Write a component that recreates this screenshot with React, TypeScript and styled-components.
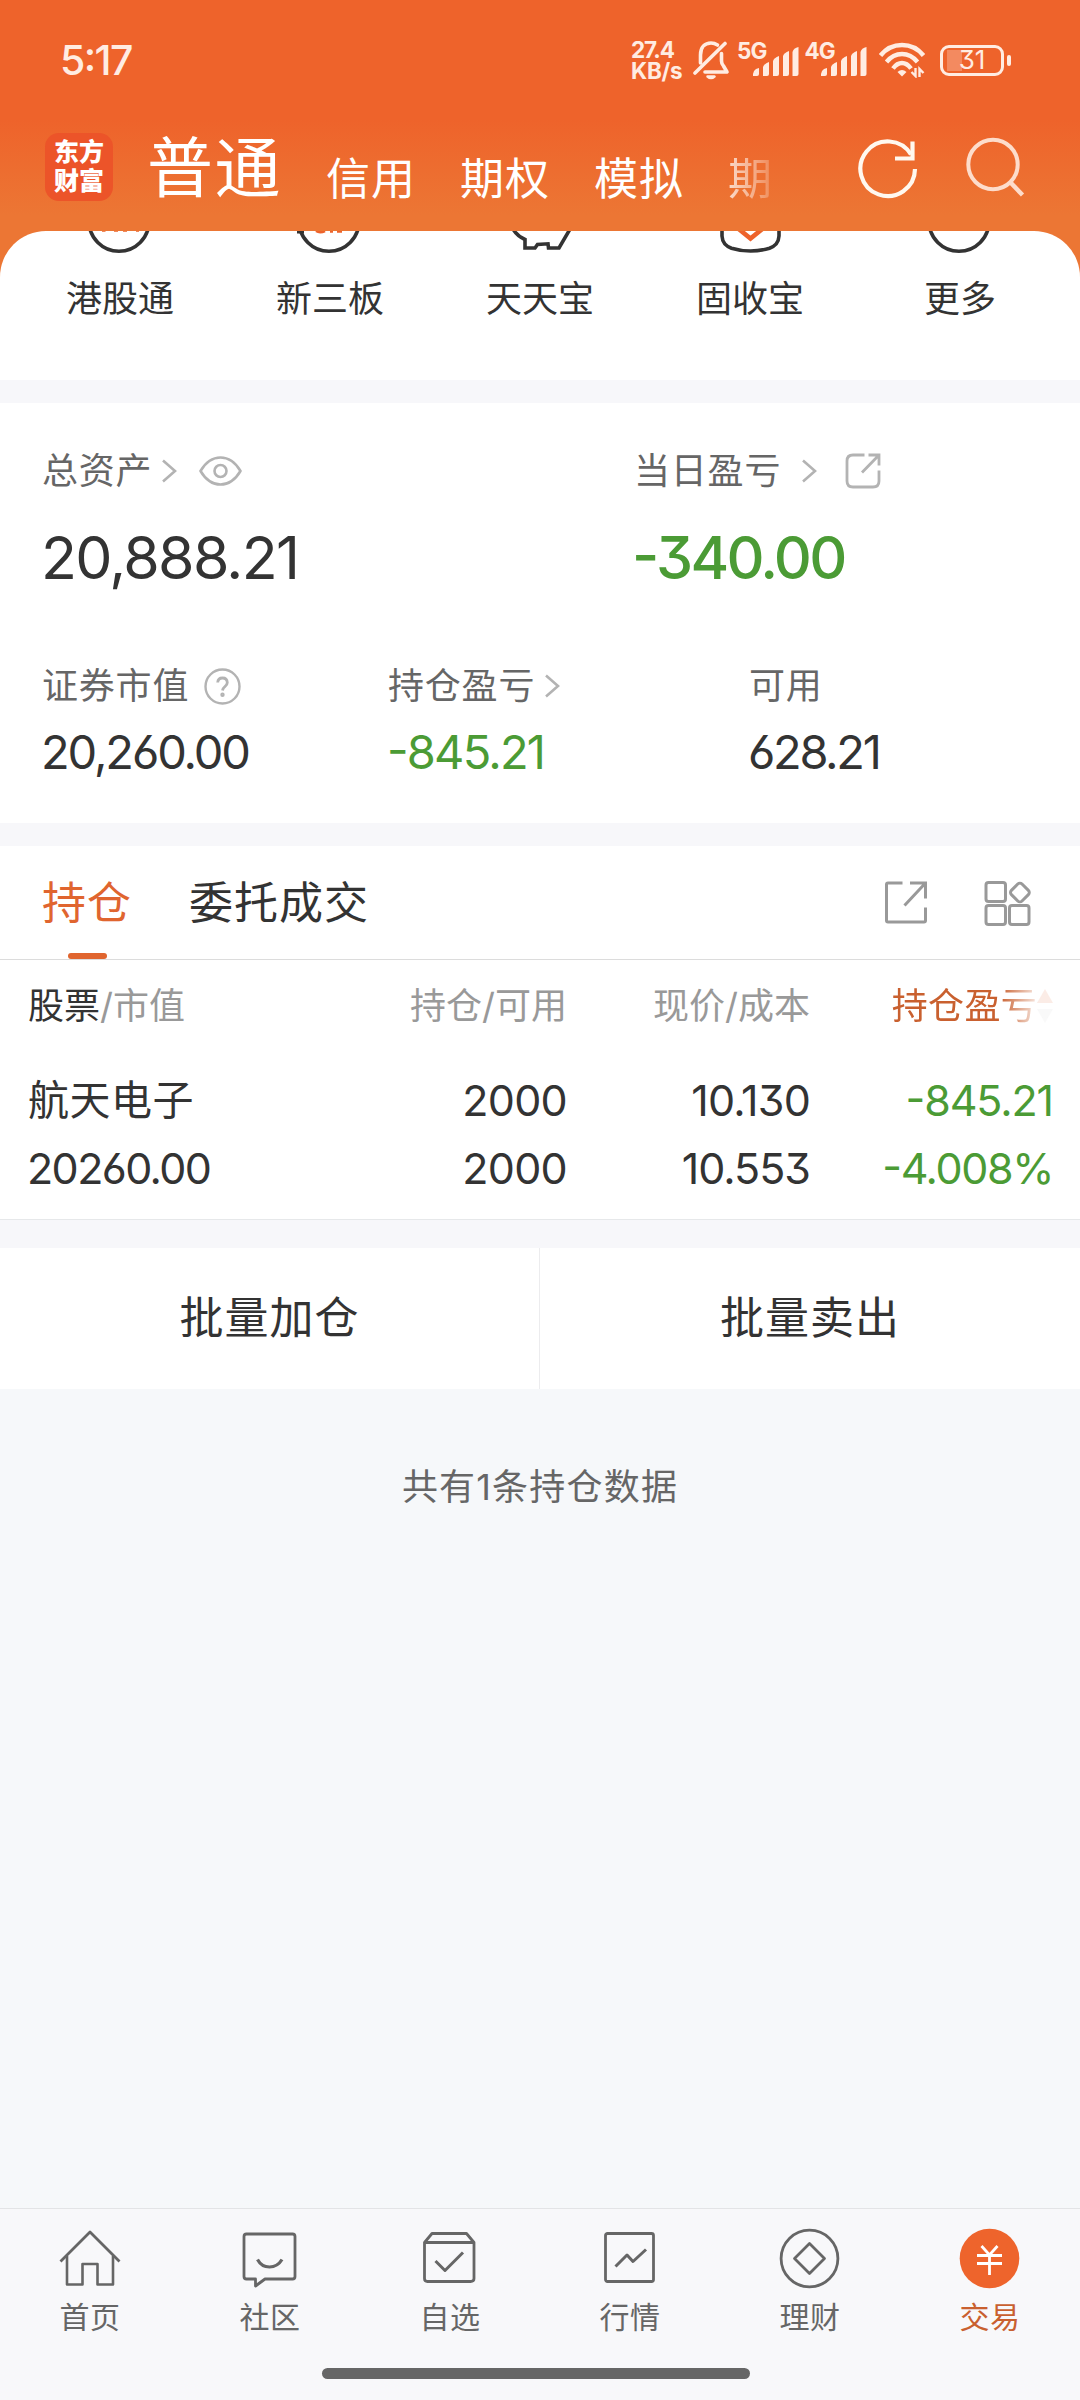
import React from "react";
import styled, { createGlobalStyle } from "styled-components";

const FONT = `Inter, "Noto Sans CJK SC", sans-serif`;
const INK = "#333333";
const GRAY = "#666666";
const LIGHT = "#999999";
const FAINT = "#b3b3b3";
const GREEN = "#4b9b35";
const ORANGE = "#e0652f";

const Global = createGlobalStyle`
  * { box-sizing: border-box; }
  body { margin: 0; background: #f7f8fa; }
  svg { display: block; flex: none; }
`;

const Screen = styled.div`
  width: 1080px;
  height: 2400px;
  display: flex;
  flex-direction: column;
  overflow: hidden;
  background: #f6f8fa;
  font-family: ${FONT};
  color: ${INK};
`;

const Label = styled.span<{ $size?: number; $color?: string; $ls?: number; $weight?: number; $ml?: number }>`
  font-size: ${(p) => p.$size ?? 36}px;
  line-height: ${(p) => p.$size ?? 36}px;
  color: ${(p) => p.$color ?? "inherit"};
  letter-spacing: ${(p) => p.$ls ?? 0}px;
  font-weight: ${(p) => p.$weight ?? 400};
  margin-left: ${(p) => p.$ml ?? 0}px;
  font-feature-settings: "case", "cv03", "cv04", "cv09";
  white-space: nowrap;
`;

const Header = styled.header`
  height: 231px;
  flex: none;
  background: linear-gradient(#ee632b 0, #ee632b 120px, #ec7634 215px, #ec7634 100%);
  color: #fff;
`;

const StatusBar = styled.div`
  height: 120px;
  padding: 0 69px 0 60px;
  display: flex;
  align-items: center;
  justify-content: space-between;
  color: #ffece2;
`;

const StatusIcons = styled.div`
  display: flex;
  align-items: center;
`;

const Speed = styled.div`
  display: flex;
  flex-direction: column;
  width: 62px;
`;

const SpeedLine = styled.span<{ $ls: number }>`
  font-size: 22.5px;
  line-height: 21px;
  font-weight: 700;
  letter-spacing: ${(p) => p.$ls}px;
`;

const Signal = styled.div`
  display: flex;
  width: 67.5px;
  height: 36px;
`;

const WifiSlot = styled.div`
  margin-left: 7px;
`;

const Generation = styled.span`
  width: 16px;
  font-size: 22.5px;
  line-height: 17px;
  font-weight: 700;
  letter-spacing: -1px;
  white-space: nowrap;
`;

const Battery = styled.div`
  width: 64px;
  height: 31px;
  margin-left: 15px;
  border: 3px solid #ffece2;
  border-radius: 9px;
  display: flex;
  align-items: center;
  justify-content: center;
  background: linear-gradient(90deg, #f38a60 15px, transparent 15px) 4px 2px / 50px 21px no-repeat;
`;

const BatteryCap = styled.div`
  width: 4px;
  height: 11px;
  margin-left: 3px;
  border-radius: 2px;
  background: #ffece2;
`;

const TitleBar = styled.div`
  height: 111px;
  display: flex;
  padding: 13px 55px 0 45px;
`;

const Brand = styled.div`
  width: 68px;
  height: 68px;
  border-radius: 14px;
  background: #ec5429;
  display: flex;
  flex-direction: column;
  align-items: center;
  justify-content: center;
  gap: 4px;
`;

const AccountTabs = styled.nav`
  height: 68px;
  margin-left: 34px;
  display: flex;
  align-items: flex-end;
  gap: 44px;
  flex: 1;
`;

const Fading = styled(Label)`
  mask-image: linear-gradient(90deg, rgba(0, 0, 0, 0.75), rgba(0, 0, 0, 0.2));
`;

const HeaderActions = styled.div`
  display: flex;
  gap: 42px;
  padding-top: 4px;
`;

const PanelBack = styled.div`
  flex: none;
  background: linear-gradient(#ec7634 60px, #fff 60px);
`;

const Services = styled.section`
  height: 149px;
  padding-left: 15px;
  display: flex;
  background: #fff;
  border-radius: 46px 46px 0 0;
`;

const Service = styled.div`
  width: 210px;
  display: flex;
  flex-direction: column;
  align-items: center;
  gap: 26px;
`;

const Band = styled.div<{ $h: number }>`
  flex: none;
  height: ${(p) => p.$h}px;
  background: #f7f7fa;
`;

const Assets = styled.section`
  flex: none;
  height: 420px;
  padding: 49px 43px 0;
  background: #fff;
`;

const AssetRow = styled.div<{ $cols: string; $gap: number; $mt?: number }>`
  display: grid;
  grid-template-columns: ${(p) => p.$cols};
  row-gap: ${(p) => p.$gap}px;
  margin-top: ${(p) => p.$mt ?? 0}px;
`;

const Caption = styled.div`
  height: 38px;
  display: flex;
  align-items: center;
`;

const Spacer = styled.span<{ $w: number }>`
  width: ${(p) => p.$w}px;
`;

const Tabs = styled.section`
  flex: none;
  height: 114px;
  padding: 0 49px 0 42px;
  display: flex;
  background: #fff;
  border-bottom: 1px solid #dcdcdc;
`;

const Tab = styled.div`
  position: relative;
  height: 113px;
  margin-right: 57px;
  display: flex;
  align-items: center;
`;

const Underline = styled.div`
  position: absolute;
  left: 26px;
  bottom: 0;
  width: 39px;
  height: 6px;
  border-radius: 3px;
  background: ${ORANGE};
`;

const TabTools = styled.div`
  margin-left: auto;
  display: flex;
  align-items: center;
  gap: 56px;
`;

const Holdings = styled.section`
  flex: none;
  height: 260px;
  padding: 27px 27px 0 28px;
  background: #fff;
  border-bottom: 1px solid #e6e8ea;
`;

const TableRow = styled.div<{ $h: number; $mt?: number }>`
  display: grid;
  grid-template-columns: 301px 238px 243px 1fr;
  height: ${(p) => p.$h}px;
  margin-top: ${(p) => p.$mt ?? 0}px;
  align-items: center;
`;

const Cell = styled.div<{ $right?: boolean }>`
  display: flex;
  align-items: center;
  justify-content: ${(p) => (p.$right ? "flex-end" : "flex-start")};
`;

const SortHead = styled.div`
  display: flex;
  align-items: center;
  justify-content: flex-end;
  mask-image: linear-gradient(90deg, #000 78%, rgba(0, 0, 0, 0.12) 94%);
`;

const Batch = styled.section`
  flex: none;
  height: 141px;
  display: grid;
  grid-template-columns: 539px 1fr;
  background: #fff;
`;

const BatchButton = styled.div<{ $line?: boolean }>`
  display: flex;
  align-items: center;
  justify-content: center;
  padding-bottom: 2px;
  border-left: ${(p) => (p.$line ? "1px solid #ececee" : "none")};
`;

const Summary = styled.div`
  flex: 1;
  padding-top: 80px;
  text-align: center;
`;

const BottomNav = styled.nav`
  flex: none;
  height: 192px;
  border-top: 1px solid #e3e4e6;
  background: #f8f8fa;
`;

const NavItems = styled.div`
  height: 159px;
  display: grid;
  grid-template-columns: repeat(6, 180px);
`;

const NavItem = styled.div`
  display: flex;
  flex-direction: column;
  align-items: center;
  padding-top: 16px;
  gap: 11px;
`;

const GestureBar = styled.div`
  width: 428px;
  height: 11px;
  margin-left: 322px;
  border-radius: 6px;
  background: ${GRAY};
`;

const SignalBars = () => (
  <svg width="47" height="36" viewBox="0 0 47 36" fill="#ffece2">
    <path d="M0 34v-2q0-3 3-5l3-1v6q0 2-2 2z" />
    <path d="M10 34v-9q1-3 6-5v12q0 2-2 2z" />
    <path d="M20 34v-15q1-3 6-5v18q0 2-2 2z" />
    <path d="M30 34v-20q1-3 6-5v23q0 2-2 2z" />
    <path d="M39.500 34v-24q1-4 6-5v27q0 2-2 2z" />
  </svg>
);

const BellOff = () => (
  <svg width="44" height="40" viewBox="0 0 44 40" fill="none" stroke="#ffece2" strokeWidth="3.600" strokeLinecap="round" strokeLinejoin="round">
    <path d="M2 33L32 3.500" />
    <path d="M7.500 23V15C7.500 7 12 3 18 3q3.500 0 6.500 2" />
    <path d="M28.500 13.500v7.500q0 3 2 5l3.500 6H12" />
    <path d="M14.500 36.500q3.500 3 7 0z" strokeWidth="2.500" />
  </svg>
);

const Wifi = () => (
  <svg width="46" height="36" viewBox="0 0 46 36" fill="none" stroke="#ffece2" strokeWidth="4.400">
    <path d="M1.500 13.500Q10 3 23 3t21.500 10.500" />
    <path d="M7.500 20Q14 12 23 12t15.500 8" />
    <path d="M14 26.500Q18 21 23 21t9 5.500" />
    <path d="M23 34.500l-4.500-4.500q4.500-4 9 0z" fill="#ffece2" stroke="none" />
    <path d="M36.500 26v8l-4-4M40.500 35v-8l4 4" strokeWidth="2.400" />
  </svg>
);

const Refresh = () => (
  <svg width="64" height="64" viewBox="0 0 64 64" fill="none" stroke="#fff8ef" strokeWidth="4.200">
    <path d="M60 32A27.300 27.300 0 1 1 56 17.500" />
    <path d="M57.500 4.500V21.500H40" />
  </svg>
);

const SearchIcon = () => (
  <svg width="64" height="64" viewBox="0 0 64 64" fill="none" stroke="#fddccb" strokeWidth="4">
    <circle cx="32" cy="27.500" r="24.700" />
    <path d="M49.500 45.500L61.500 58" strokeWidth="4.500" />
  </svg>
);

const svcStroke = { fill: "none", stroke: "#333", strokeWidth: 3.6 };
const Arc = ({ children }: { children?: React.ReactNode }) => (
  <svg width="80" height="24" viewBox="0 0 80 24" {...svcStroke}>
    <circle cx="39" cy="-9.800" r="30" />
    {children}
  </svg>
);

const serviceList = [
  {
    name: "港股通",
    icon: (
      <Arc>
        <path d="M22 .3h3.500M34 .3h4M43 .3h4M56 .3h3" stroke="#f08a5f" strokeWidth="1.600" />
      </Arc>
    ),
  },
  {
    name: "新三板",
    icon: (
      <Arc>
        <path d="M26 0q4 2.500 9 0M40 .5h3M47 .5h5" stroke="#ee632b" strokeWidth="2.600" />
        <path d="M7 1h7" strokeWidth="3" />
      </Arc>
    ),
  },
  {
    name: "天天宝",
    icon: (
      <svg width="80" height="24" viewBox="0 0 80 24" {...svcStroke}>
        <path d="M13 -2Q17 5 25 8.500V17H35L37.500 13.500L48 12.800L48.500 17H59L69.500 -1" />
      </svg>
    ),
  },
  {
    name: "固收宝",
    icon: (
      <svg width="80" height="24" viewBox="0 0 80 24" {...svcStroke}>
        <path d="M12 -4V5Q12.500 14 21.500 17.200Q30.500 20 40.500 20T59.500 17.200Q68.500 14 69 5V-4" />
        <path d="M27.500 -3L40.500 7.500L53.500 -3" stroke="#ee632b" strokeWidth="4.600" />
      </svg>
    ),
  },
  { name: "更多", icon: <Arc /> },
];

const Chevron = () => (
  <svg width="15" height="24" viewBox="0 0 15 24" fill="none" stroke={FAINT} strokeWidth="2.600">
    <path d="M1 1.500L13 12L1 22.500" />
  </svg>
);

const Eye = () => (
  <svg width="43" height="30" viewBox="0 0 43 30" fill="none" stroke={FAINT} strokeWidth="2.600">
    <path d="M1.500 15Q9.500 1.500 21.500 1.500T41.500 15Q33.500 28.500 21.500 28.500T1.500 15z" strokeLinejoin="round" />
    <circle cx="21.500" cy="15" r="6" />
  </svg>
);

const Help = () => (
  <svg width="37" height="37" viewBox="0 0 37 37" fill="none" stroke={FAINT} strokeWidth="2.400">
    <circle cx="18.500" cy="18.500" r="17" />
    <path d="M13.700 14.500Q14 10 18.500 10T23.300 14.500Q23.300 16.500 21 18.500T18.500 22.500" strokeWidth="2.800" />
    <circle cx="18.500" cy="26.800" r="1" />
  </svg>
);

const ShareRound = () => (
  <svg width="36" height="36" viewBox="0 0 36 36" fill="none" stroke={FAINT} strokeWidth="2.800">
    <path d="M19.500 2H8Q2 2 2 8V28Q2 34 8 34H28Q34 34 34 28V17.500" />
    <path d="M23.500 2H34V12.500M34 2L17 19.500" />
  </svg>
);

const ShareSquare = () => (
  <svg width="44" height="44" viewBox="0 0 44 44" fill="none" stroke={LIGHT} strokeWidth="3">
    <path d="M18.500 2H4Q2.500 2 2.500 3.500V39.500Q2.500 41 4 41H40Q41.500 41 41.500 39.500V26.500" strokeLinejoin="round" />
    <path d="M26 2H41.500V17.500M41.500 2L20.500 24.500" />
  </svg>
);

const Widgets = () => (
  <svg width="47" height="46" viewBox="0 0 47 46" fill="none" stroke={LIGHT} strokeWidth="3">
    <rect x="2" y="2.500" width="19.500" height="19" rx="2.500" />
    <rect x="2" y="25.500" width="19.500" height="19" rx="2.500" />
    <rect x="25.500" y="25.500" width="19.500" height="19" rx="2.500" />
    <rect x="28.400" y="5" width="15" height="15" rx="3" transform="rotate(45 35.900 12.500)" />
  </svg>
);

const SortArrows = () => (
  <svg width="16" height="34" viewBox="0 0 16 34">
    <path d="M8 0L16 14H0z" fill={ORANGE} />
    <path d="M8 34L0 20H16z" fill="#ccc" />
  </svg>
);

const navStroke = { width: 66, height: 66, viewBox: "0 0 66 66", fill: "none", stroke: GRAY, strokeWidth: 2.8, strokeLinejoin: "round" as const };

const navList = [
  {
    name: "首页",
    icon: (
      <svg {...navStroke}>
        <path d="M3.500 36.500L33 7L62.500 36.500" />
        <path d="M10 31V59.500H25.500V39H40.500V59.500H56V31" strokeWidth="2.600" />
      </svg>
    ),
  },
  {
    name: "社区",
    icon: (
      <svg {...navStroke}>
        <path d="M9.500 9H55.500Q58 9 58 11.500V51.500Q58 54 55.500 54H28L18.500 61V54H9.500Q7 54 7 51.500V11.500Q7 9 9.500 9z" />
        <path d="M20.500 34.500Q24.500 42 32.500 42T45 34.500" strokeWidth="3.200" />
      </svg>
    ),
  },
  {
    name: "自选",
    icon: (
      <svg {...navStroke}>
        <path d="M7.500 17.500V53.500Q7.500 56.500 10.500 56.500H53.500Q57 56.500 57 53.500V17.500L49.500 8.500H15L7.500 17.500H57" />
        <path d="M18.500 36L28 45.500L46 27.500" strokeWidth="3" />
      </svg>
    ),
  },
  {
    name: "行情",
    icon: (
      <svg {...navStroke}>
        <rect x="8.500" y="8.500" width="48" height="48" rx="2" />
        <path d="M18.500 41.500L30 30L36 36.500L49 24.500" strokeWidth="3" />
      </svg>
    ),
  },
  {
    name: "理财",
    icon: (
      <svg {...navStroke}>
        <circle cx="32.500" cy="33.500" r="28.400" />
        <path d="M32.500 18.500L47.500 33.500L32.500 48.500L17.500 33.500z" />
      </svg>
    ),
  },
  {
    name: "交易",
    active: true,
    icon: (
      <svg {...navStroke} stroke="#fff" strokeLinejoin="miter">
        <circle cx="32.500" cy="33.500" r="29.800" fill="#ee642c" stroke="none" />
        <path d="M24.500 21L32.500 30L40.500 21M20 30.500H45M20 38.500H45M32.500 30V50" />
      </svg>
    ),
  },
];

export default function App() {
  return (
    <Screen>
      <Global />
      <Header>
        <StatusBar>
          <Label $size={41} $weight={500} $ls={-1.6}>5:17</Label>
          <StatusIcons>
            <Speed>
              <SpeedLine $ls={-1.1}>27.4</SpeedLine>
              <SpeedLine $ls={-0.3}>KB/s</SpeedLine>
            </Speed>
            <BellOff />
            <Signal>
              <Generation>5G</Generation>
              <SignalBars />
            </Signal>
            <Signal>
              <Generation>4G</Generation>
              <SignalBars />
            </Signal>
            <WifiSlot>
              <Wifi />
            </WifiSlot>
            <Battery>
              <Label $size={26}>31</Label>
            </Battery>
            <BatteryCap />
          </StatusIcons>
        </StatusBar>
        <TitleBar>
          <Brand>
            <Label $size={25} $weight={900}>东方</Label>
            <Label $size={25} $weight={900}>财富</Label>
          </Brand>
          <AccountTabs>
            <Label $size={66} $ls={1.5}>普通</Label>
            <Label $size={44} $ls={1}>信用</Label>
            <Label $size={44} $ls={1}>期权</Label>
            <Label $size={44} $ls={1}>模拟</Label>
            <Fading $size={44}>期</Fading>
          </AccountTabs>
          <HeaderActions>
            <Refresh />
            <SearchIcon />
          </HeaderActions>
        </TitleBar>
      </Header>

      <PanelBack>
        <Services>
          {serviceList.map((s) => (
            <Service key={s.name}>
              {s.icon}
              <Label $size={36}>{s.name}</Label>
            </Service>
          ))}
        </Services>
      </PanelBack>
      <Band $h={23} />

      <Assets>
        <AssetRow $cols="591px 1fr" $gap={38}>
          <Caption>
            <Label $color={GRAY} $ls={0.8} $ml={-1}>总资产</Label>
            <Spacer $w={10} />
            <Chevron />
            <Spacer $w={22} />
            <Eye />
          </Caption>
          <Caption>
            <Label $color={GRAY} $ls={0.8}>当日盈亏</Label>
            <Spacer $w={21} />
            <Chevron />
            <Spacer $w={28} />
            <ShareRound />
          </Caption>
          <Label $size={59} $ls={-1.7} $ml={-2}>20,888.21</Label>
          <Label $size={59} $ls={-2.7} $ml={-2} $weight={500} $color={GREEN}>-340.00</Label>
        </AssetRow>
        <AssetRow $cols="345px 361px 1fr" $gap={23} $mt={80}>
          <Caption>
            <Label $color={GRAY} $ls={0.8} $ml={-1}>证券市值</Label>
            <Spacer $w={15} />
            <Help />
          </Caption>
          <Caption>
            <Label $color={GRAY} $ls={0.8}>持仓盈亏</Label>
            <Spacer $w={10} />
            <Chevron />
          </Caption>
          <Caption>
            <Label $color={GRAY} $ls={0.8}>可用</Label>
          </Caption>
          <Label $size={47} $ls={-2.1} $ml={-2}>20,260.00</Label>
          <Label $size={47} $ls={-1.8} $ml={-1} $color={GREEN}>-845.21</Label>
          <Label $size={47} $ls={-2.3} $ml={-1}>628.21</Label>
        </AssetRow>
      </Assets>
      <Band $h={23} />

      <Tabs>
        <Tab>
          <Label $size={44} $ls={1} $color={ORANGE}>持仓</Label>
          <Underline />
        </Tab>
        <Tab>
          <Label $size={44} $ls={1}>委托成交</Label>
        </Tab>
        <TabTools>
          <ShareSquare />
          <Widgets />
        </TabTools>
      </Tabs>

      <Holdings>
        <TableRow $h={38}>
          <Cell>
            <Label>股票</Label>
            <Label $color={LIGHT}>/市值</Label>
          </Cell>
          <Cell $right>
            <Label $color={LIGHT}>持仓/可用</Label>
          </Cell>
          <Cell $right>
            <Label $color={LIGHT}>现价/成本</Label>
          </Cell>
          <SortHead>
            <Label $ls={0.3} $color="#c9602f">持仓盈亏</Label>
            <SortArrows />
          </SortHead>
        </TableRow>
        <TableRow $h={68} $mt={41}>
          <Cell><Label $size={41} $ls={0.5}>航天电子</Label></Cell>
          <Cell $right><Label $size={43} $ls={-0.7}>2000</Label></Cell>
          <Cell $right><Label $size={43} $ls={-0.8}>10.130</Label></Cell>
          <Cell $right><Label $size={43} $ls={-1.1} $color={GREEN}>-845.21</Label></Cell>
        </TableRow>
        <TableRow $h={68}>
          <Cell><Label $size={43} $ls={-1.6} $ml={-1}>20260.00</Label></Cell>
          <Cell $right><Label $size={43} $ls={-0.7}>2000</Label></Cell>
          <Cell $right><Label $size={43} $ls={-1}>10.553</Label></Cell>
          <Cell $right><Label $size={43} $ls={-1.4} $color={GREEN}>-4.008%</Label></Cell>
        </TableRow>
      </Holdings>
      <Band $h={28} />

      <Batch>
        <BatchButton><Label $size={44} $ls={1}>批量加仓</Label></BatchButton>
        <BatchButton $line><Label $size={44} $ls={1}>批量卖出</Label></BatchButton>
      </Batch>

      <Summary>
        <Label $color={GRAY} $ls={1.2}>共有1条持仓数据</Label>
      </Summary>

      <BottomNav>
        <NavItems>
          {navList.map((n) => (
            <NavItem key={n.name}>
              {n.icon}
              <Label $size={30} $ls={0.5} $color={n.active ? "#c9602f" : GRAY}>{n.name}</Label>
            </NavItem>
          ))}
        </NavItems>
        <GestureBar />
      </BottomNav>
    </Screen>
  );
}
